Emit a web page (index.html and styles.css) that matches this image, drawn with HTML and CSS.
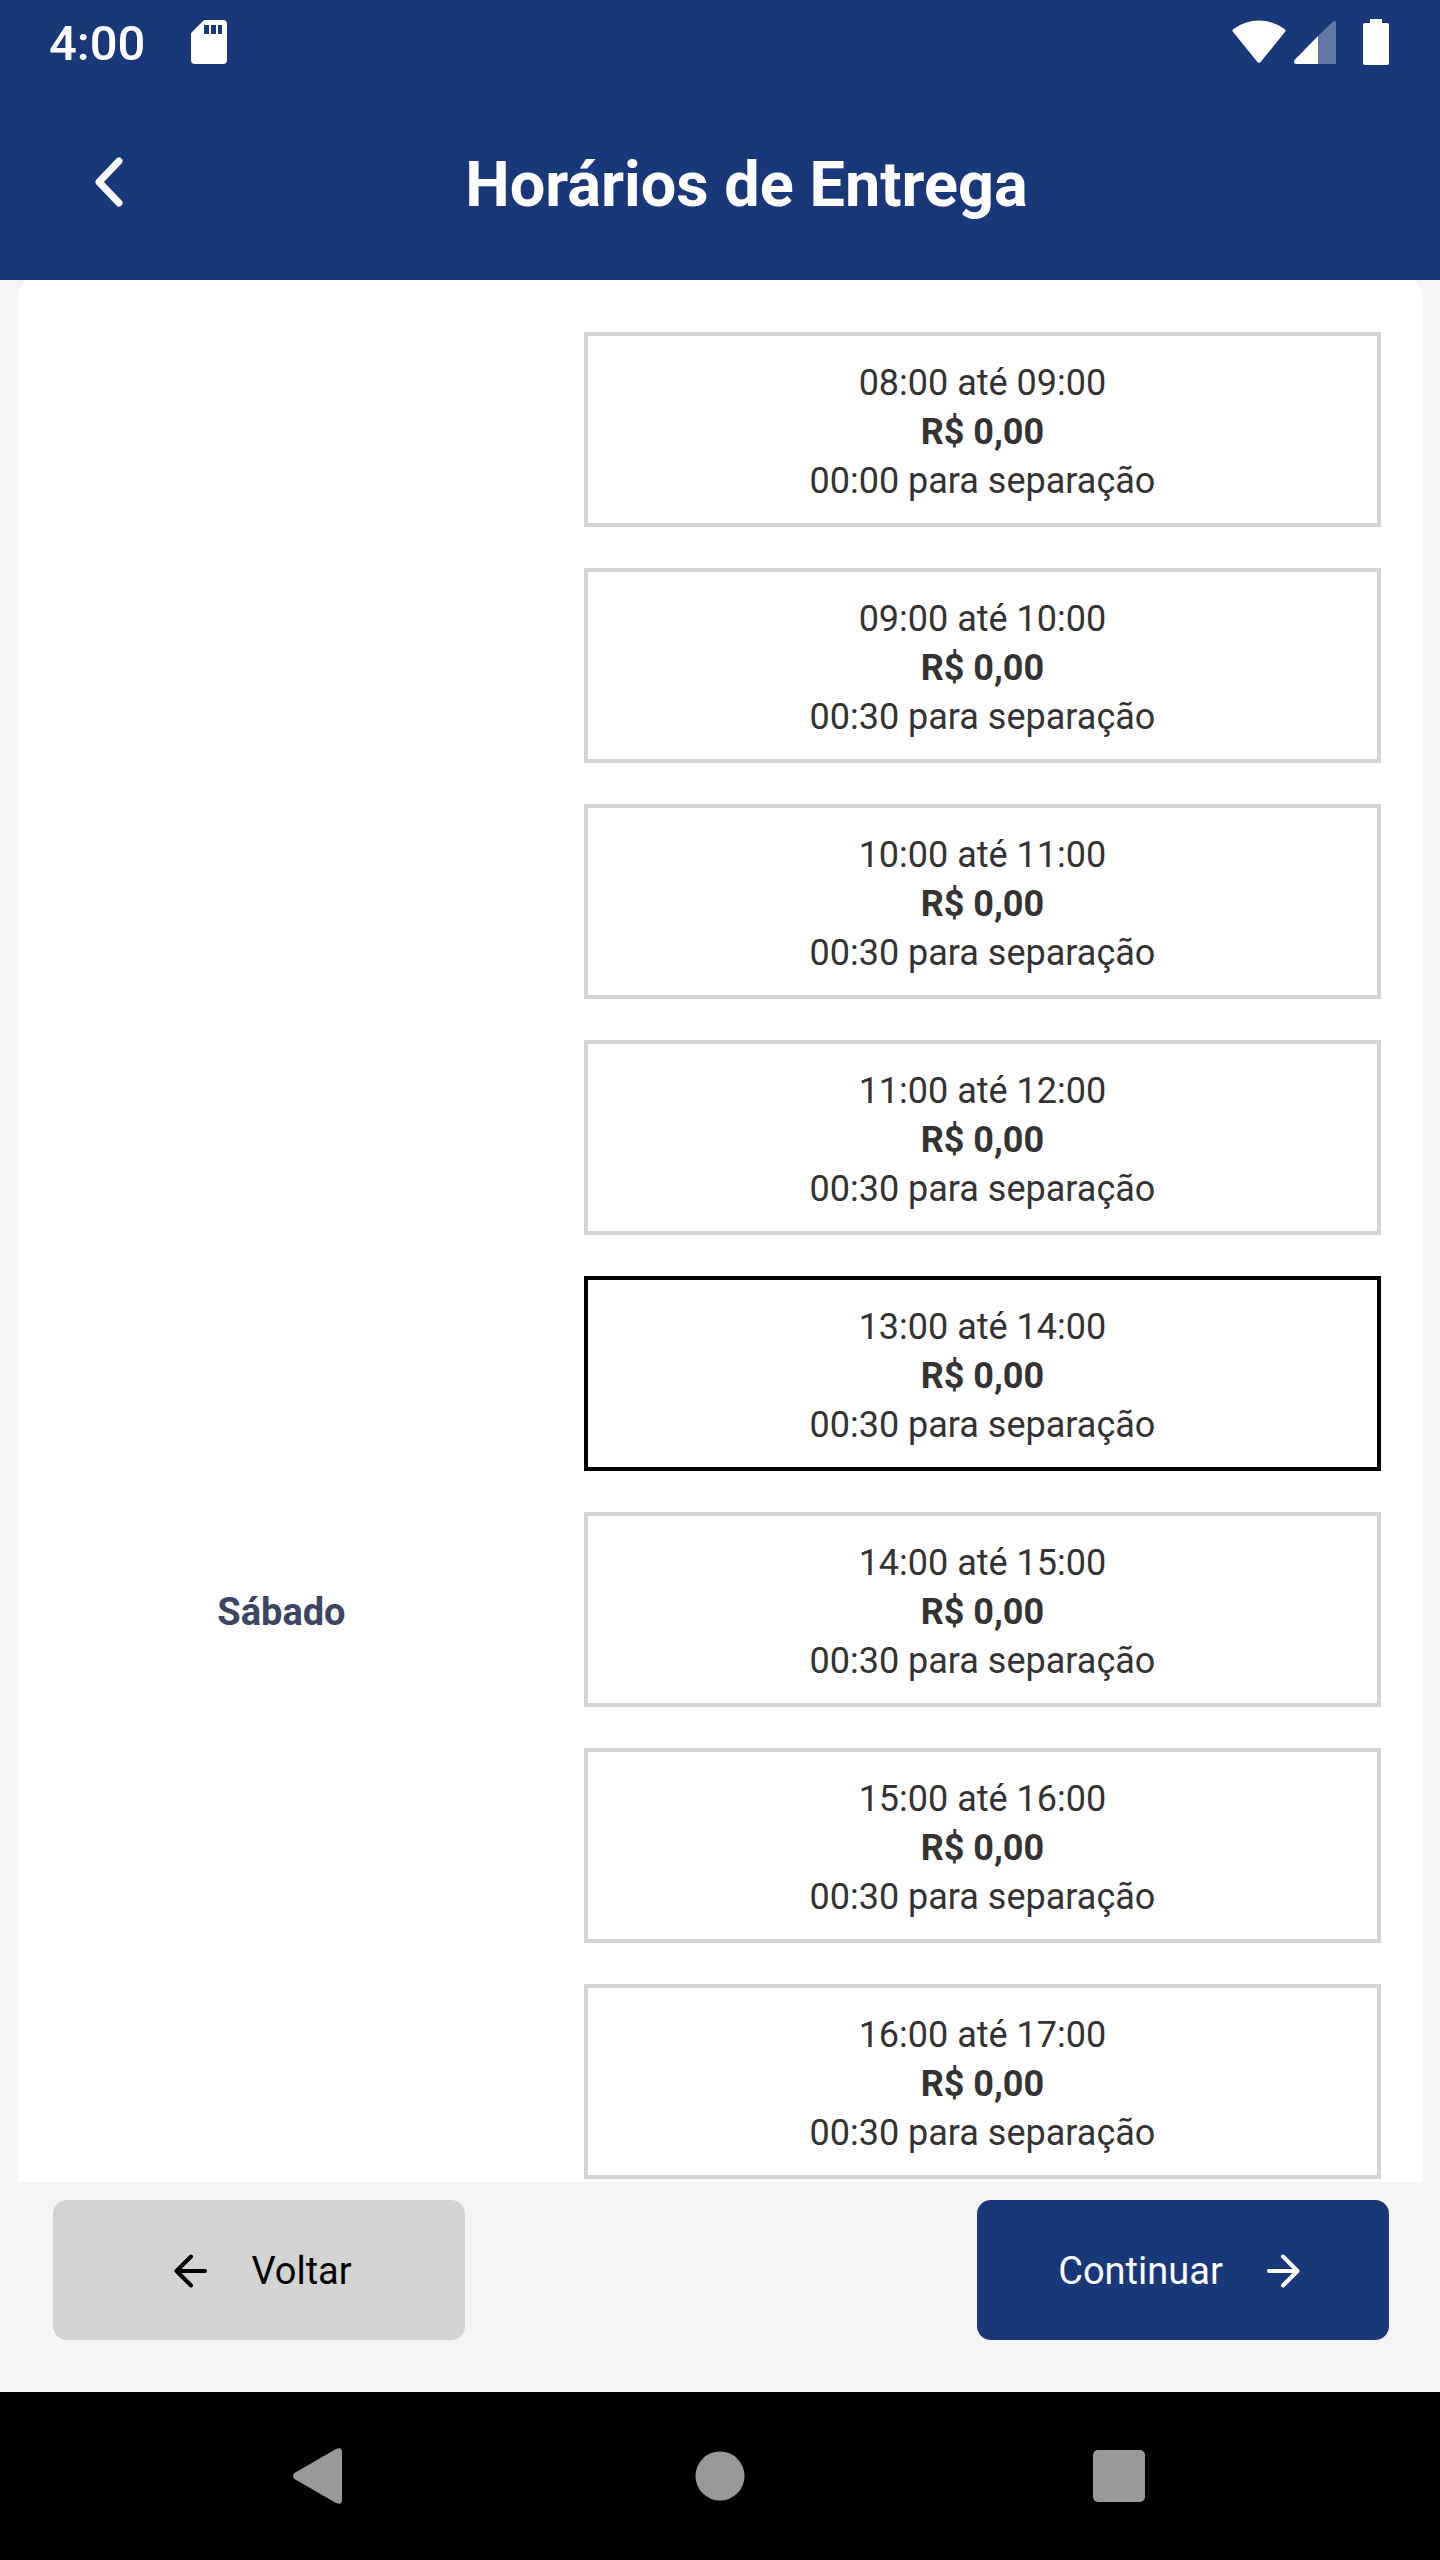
FILE: index.html
```html
<!DOCTYPE html>
<html lang="pt-BR">
<head>
<meta charset="utf-8">
<meta name="viewport" content="width=device-width, initial-scale=1">
<title>Horários de Entrega</title>
<link rel="stylesheet" href="styles.css">
</head>
<body>
<div class="app">
  <div class="status">
    <span class="clock">4:00</span>
    <svg class="sd" width="36" height="44" viewBox="0 0 36 44"><path fill="#fff" fill-rule="evenodd" d="M14 0H32Q36 0 36 4V40Q36 44 32 44H4Q0 44 0 40V14Q0 13 1 12L12 1Q13 0 14 0ZM13 5V14H18V5ZM20 5V14H25V5ZM27 5V14H31V5Z"/></svg>
    <div class="signals">
      <svg width="54" height="44" viewBox="0 0 54 44"><path fill="#fff" d="M1.500 12.500Q-0.500 10.500 1.500 9Q13 0.500 27 0.500T52.500 9Q54.500 10.500 52.500 12.500L29 41.500Q27 44 25 41.500Z"/></svg>
      <svg width="42" height="44" viewBox="0 0 42 44"><path fill="#6478a6" d="M24 16L38.500 2Q42 -0.500 42 3V44H24Z"/><path fill="#fff" d="M24 16V44H2Q-1.500 43 1 39.500Z"/></svg>
      <svg class="battery" width="26" height="46" viewBox="0 0 26 46"><path fill="#fff" d="M7 0H19V4H24Q26 4 26 6V44Q26 46 24 46H2Q0 46 0 44V6Q0 4 2 4H7Z"/></svg>
    </div>
  </div>

  <header class="header">
    <button class="back" type="button" aria-label="Voltar">
      <svg width="30" height="50" viewBox="0 0 30 50"><path d="M25 4L5 25L25 46" fill="none" stroke="#fff" stroke-width="7" stroke-linecap="round" stroke-linejoin="round"/></svg>
    </button>
    <h1 class="title">Horários de Entrega</h1>
  </header>

  <main class="scroller">
    <fieldset class="panel" aria-labelledby="day">
      <h2 class="day" id="day">Sábado</h2>
      <div class="slots">
        <label class="slot"><input type="radio" name="slot"><span>08:00 até 09:00</span><b>R$ 0,00</b><span>00:00 para separação</span></label>
        <label class="slot"><input type="radio" name="slot"><span>09:00 até 10:00</span><b>R$ 0,00</b><span>00:30 para separação</span></label>
        <label class="slot"><input type="radio" name="slot"><span>10:00 até 11:00</span><b>R$ 0,00</b><span>00:30 para separação</span></label>
        <label class="slot"><input type="radio" name="slot"><span>11:00 até 12:00</span><b>R$ 0,00</b><span>00:30 para separação</span></label>
        <label class="slot"><input type="radio" name="slot" checked><span>13:00 até 14:00</span><b>R$ 0,00</b><span>00:30 para separação</span></label>
        <label class="slot"><input type="radio" name="slot"><span>14:00 até 15:00</span><b>R$ 0,00</b><span>00:30 para separação</span></label>
        <label class="slot"><input type="radio" name="slot"><span>15:00 até 16:00</span><b>R$ 0,00</b><span>00:30 para separação</span></label>
        <label class="slot"><input type="radio" name="slot"><span>16:00 até 17:00</span><b>R$ 0,00</b><span>00:30 para separação</span></label>
      </div>
    </fieldset>
  </main>

  <footer class="actions">
    <button class="btn btn-secondary" type="button">
      <svg width="34" height="34" viewBox="0 0 34 34"><path d="M31 17H3M17 2.500L2.500 17L17 31.500" fill="none" stroke="currentColor" stroke-width="4" stroke-linecap="round" stroke-linejoin="round"/></svg>
      Voltar
    </button>
    <button class="btn btn-primary" type="button">
      Continuar
      <svg width="34" height="34" viewBox="0 0 34 34"><path d="M3 17H31M17 2.500L31.500 17L17 31.500" fill="none" stroke="currentColor" stroke-width="4" stroke-linecap="round" stroke-linejoin="round"/></svg>
    </button>
  </footer>

  <nav class="system" aria-label="Sistema">
    <button type="button" aria-label="Anterior"><svg width="56" height="56" viewBox="0 0 56 56"><path fill="#999" d="M1.500 25L43 1Q49 -1.500 49 4V52Q49 57.500 43 55L1.500 31Q-1.500 28 1.500 25Z"/></svg></button>
    <button type="button" aria-label="Início"><svg width="56" height="56" viewBox="0 0 56 56"><circle cx="28" cy="28" r="24.500" fill="#999"/></svg></button>
    <button type="button" aria-label="Recentes"><svg width="56" height="56" viewBox="0 0 56 56"><rect x="2" y="2" width="52" height="52" rx="5" fill="#999"/></svg></button>
  </nav>
</div>
</body>
</html>
```
FILE: styles.css
```css
* {
  box-sizing: border-box;
}

body {
  margin: 0;
  font-family: Roboto, "Liberation Sans", sans-serif;
  background: #f5f5f5;
}

button {
  border: 0;
  padding: 0;
  background: none;
  font: inherit;
}

svg {
  display: block;
  flex: none;
}

.app {
  display: flex;
  flex-direction: column;
  height: 100vh;
}

.status {
  display: flex;
  align-items: center;
  height: 84px;
  padding: 0 51px 0 49px;
  background: #18387a;
  color: #fff;
}

.clock {
  padding-top: 4px;
  font-size: 49px;
  font-weight: 500;
  line-height: 80px;
}

.sd {
  margin-left: 46px;
}

.signals {
  display: flex;
  align-items: center;
  gap: 8px;
  margin-left: auto;
}

.battery {
  margin-left: 19px;
}

.header {
  display: flex;
  align-items: center;
  height: 196px;
  padding: 0 91px 0 94px;
  background: #18387a;
  color: #fff;
}

.title {
  flex: 1;
  margin: 0;
  padding: 6px 0 0 20px;
  font-size: 63px;
  font-weight: 700;
  line-height: 84px;
  text-align: center;
}

.scroller {
  flex: 1;
  min-height: 0;
  padding: 0 17px 0 18px;
  overflow-y: auto;
  scrollbar-width: none;
}

.panel {
  display: grid;
  grid-template-columns: 3fr 5fr;
  align-items: center;
  min-width: 0;
  margin: -8px 0 0;
  padding: 60px 0;
  border: 0;
  border-radius: 28px;
  background: #fff;
}

.day {
  margin: 0;
  padding-top: 6px;
  color: #3d4564;
  font-size: 38px;
  font-weight: 700;
  line-height: 49px;
  text-align: center;
}

.slots {
  display: grid;
  grid-template-rows: repeat(11, 195px);
  gap: 41px;
  padding: 0 42px 0 39px;
}

.slot {
  position: relative;
  display: flex;
  flex-direction: column;
  align-items: center;
  justify-content: center;
  padding-top: 6px;
  color: #333;
  font-size: 36px;
  line-height: 49px;
}

.slot input {
  position: absolute;
  inset: 0;
  margin: 0;
  border: 4px solid #d3d3d3;
  appearance: none;
}

.slot input:checked {
  border-color: #000;
}

.actions {
  display: flex;
  justify-content: space-between;
  padding: 18px 51px 52px 53px;
}

.btn {
  display: flex;
  align-items: center;
  justify-content: center;
  gap: 43px;
  width: 412px;
  height: 140px;
  border-radius: 14px;
  font-size: 38px;
}

.btn-secondary {
  padding: 2px 0 0 8px;
  background: #d3d3d3;
  color: #000;
}

.btn-primary {
  padding: 2px 8px 0 0;
  background: #18387a;
  color: #fff;
}

.system {
  display: grid;
  grid-template-columns: repeat(3, 1fr);
  height: 168px;
  padding: 0 122px;
  background: #000;
}

.system button {
  display: flex;
  align-items: center;
  justify-content: center;
}
```
